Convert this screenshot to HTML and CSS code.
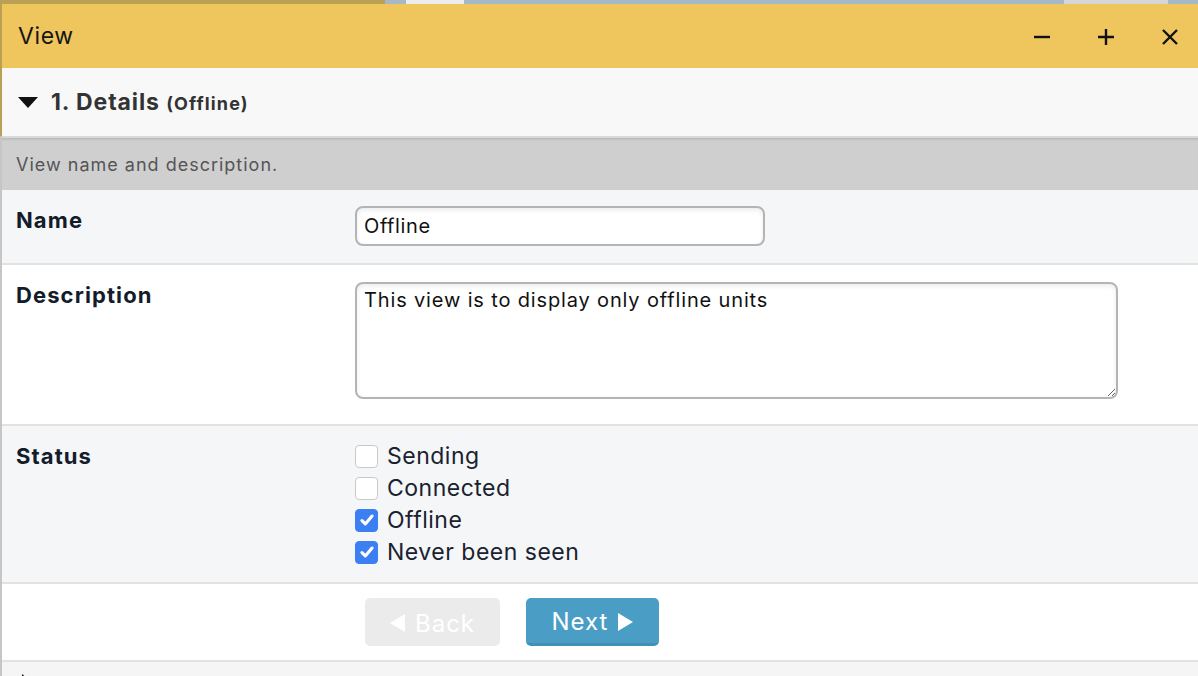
FILE: index.html
```html
<!DOCTYPE html>
<html lang="en">
<head>
    <meta charset="UTF-8">
    <title>View</title>
    <link rel="stylesheet" href="styles.css">
</head>
<body>

    <!-- strip of whatever is behind the dialog -->
    <div class="backdrop"></div>

    <div class="window">
        <!-- Title bar -->
        <div class="titlebar">
            <div class="title">View</div>
            <div class="win-icons">
                <svg class="win-icon" viewBox="0 0 20 20"><path d="M2 10H18" /></svg>
                <svg class="win-icon" viewBox="0 0 20 20"><path d="M2 10H18M10 2V18" /></svg>
                <svg class="win-icon" viewBox="0 0 20 20"><path d="M3 3L17 17M17 3L3 17" /></svg>
            </div>
        </div>

        <!-- Section 1 -->
        <div class="section-head">
            <span class="caret-down"></span>
            <span class="section-title">1. Details <small>(Offline)</small></span>
        </div>
        <div class="section-desc">View name and description.</div>

        <div class="row alt name-row">
            <div class="label">Name</div>
            <div class="field">
                <input class="text-input" type="text" value="Offline">
            </div>
        </div>

        <div class="row">
            <div class="label">Description</div>
            <div class="field desc-field">
                <textarea class="text-area">This view is to display only offline units</textarea>
            </div>
        </div>

        <div class="row alt">
            <div class="label">Status</div>
            <div class="field checks">
                <label class="check"><span class="box"></span>Sending</label>
                <label class="check"><span class="box"></span>Connected</label>
                <label class="check"><span class="box on"><svg viewBox="0 0 16 16"><path d="M3.5 8.5L6.5 11.5L12.5 4.5" /></svg></span>Offline</label>
                <label class="check"><span class="box on"><svg viewBox="0 0 16 16"><path d="M3.5 8.5L6.5 11.5L12.5 4.5" /></svg></span>Never been seen</label>
            </div>
        </div>

        <div class="row buttons">
            <button class="btn btn-back"><span class="arrow-left"></span>Back</button>
            <button class="btn btn-next">Next<span class="arrow-right"></span></button>
        </div>

        <!-- Section 2 (collapsed, cut off) -->
        <div class="section-head next-section">
            <span class="caret-right"></span>
        </div>
    </div>

</body>
</html>
```

FILE: styles.css
```css
body {
    margin: 0;
    padding: 0;
    font-family: Inter, "Noto Sans", sans-serif;
    letter-spacing: 0.045em;
    background: linear-gradient(#b9a055 0, #b9a055 136px, #c6c6c6 136px);
    height: 676px;
    overflow: hidden;
}

.backdrop {
    height: 4px;
    background: linear-gradient(90deg,
        #b9a055 0, #b9a055 385px,
        #a6b8c5 385px, #a6b8c5 406px,
        #ececec 406px, #ececec 464px,
        #a6b8c5 464px, #a6b8c5 1064px,
        #d6d6d6 1064px, #d6d6d6 1168px,
        #a6b8c5 1168px);
}

.window {
    margin-left: 2px;
    background: white;
    height: 672px;
    overflow: hidden;
}

/* Title bar */
.titlebar {
    height: 64px;
    background: #efc55d;
    display: flex;
    align-items: center;
    justify-content: space-between;
    padding: 0 18px 0 16px;
}
.title {
    font-size: 23px;
    letter-spacing: 0.6px;
    color: #151515;
}
.win-icons {
    display: flex;
    gap: 44px;
    margin-top: 2px;
}
.win-icon {
    width: 20px;
    height: 20px;
    stroke: #111;
    stroke-width: 2.4;
    fill: none;
}

/* Section header */
.section-head {
    height: 68px;
    background: #f8f8f8;
    display: flex;
    align-items: center;
    padding-left: 16px;
    border-bottom: 2px solid #d9d9d9;
}
.caret-down {
    width: 0;
    height: 0;
    border-left: 10px solid transparent;
    border-right: 10px solid transparent;
    border-top: 11px solid #111;
    margin-right: 13px;
}
.section-title {
    font-size: 23px;
    letter-spacing: 0.9px;
    font-weight: bold;
    color: #333;
}
.section-title small {
    font-size: 18px;
    letter-spacing: 1.1px;
}
.section-desc {
    height: 52px;
    background: #cfcfcf;
    color: #555;
    font-size: 18px;
    letter-spacing: 1px;
    display: flex;
    align-items: center;
    padding-left: 14px;
    box-shadow: inset 0 3px 3px -2px rgba(0,0,0,0.15);
}

/* Form rows */
.row {
    display: grid;
    grid-template-columns: 353px 1fr;
    border-bottom: 2px solid #e2e2e2;
    background: white;
}
.row.alt {
    background: #f5f6f8;
}
.label {
    padding: 17px 14px 18px;
    font-size: 22px;
    letter-spacing: 1.1px;
    font-weight: bold;
    color: #131c2b;
}
.field {
    padding: 17px 0;
}
.name-row .field {
    padding: 16px 0 17px;
}
.desc-field {
    padding: 17px 0 25px;
}
.text-input {
    width: 410px;
    height: 40px;
    box-sizing: border-box;
    border: 2px solid #b4b4b4;
    border-radius: 8px;
    padding: 0 7px;
    font-family: Inter, sans-serif;
    font-size: 20px;
    letter-spacing: 0.6px;
    color: #111;
    background: white;
    box-shadow: inset 0 2px 5px rgba(0,0,0,0.08);
    outline: none;
}
.text-area {
    display: block;
    width: 763px;
    height: 117px;
    box-sizing: border-box;
    border: 2px solid #b4b4b4;
    border-radius: 8px;
    padding: 4px 7px;
    font-family: Inter, sans-serif;
    font-size: 20px;
    letter-spacing: 0.85px;
    color: #111;
    background: white;
    box-shadow: inset 0 2px 5px rgba(0,0,0,0.08);
    outline: none;
    resize: both;
}

/* Checkboxes */
.checks {
    padding: 14px 0 14px;
}
.check {
    display: flex;
    align-items: center;
    height: 32px;
    font-size: 23px;
    letter-spacing: 0.5px;
    color: #1a2230;
}
.box {
    width: 21px;
    height: 21px;
    border: 1px solid #c9c9c9;
    border-radius: 4px;
    background: white;
    margin-right: 9px;
    display: flex;
    align-items: center;
    justify-content: center;
}
.box.on {
    background: #3b7ff2;
    border-color: #3b7ff2;
}
.box svg {
    width: 18px;
    height: 18px;
    stroke: white;
    stroke-width: 2.8;
    fill: none;
    stroke-linecap: round;
    stroke-linejoin: round;
}

/* Buttons */
.row.buttons {
    display: flex;
    gap: 26px;
    padding: 14px 0 14px 363px;
    height: 48px;
}
.btn {
    height: 48px;
    border: none;
    border-radius: 5px;
    padding-top: 3px;
    font-family: Inter, sans-serif;
    font-size: 24px;
    letter-spacing: 1px;
    color: white;
    display: flex;
    align-items: center;
    justify-content: center;
    gap: 10px;
}
.btn-back {
    width: 135px;
    background: #ebebeb;
}
.btn-next {
    width: 133px;
    background: #4a9ec6;
    border-bottom: 3px solid #4190b5;
}
.arrow-left {
    width: 0;
    height: 0;
    border-top: 9px solid transparent;
    border-bottom: 9px solid transparent;
    border-right: 15px solid white;
}
.arrow-right {
    width: 0;
    height: 0;
    border-top: 9px solid transparent;
    border-bottom: 9px solid transparent;
    border-left: 15px solid white;
}

/* next section, mostly off screen */
.next-section {
    background: #f5f5f5;
    align-items: flex-start;
    padding-top: 12px;
    padding-left: 20px;
    border-bottom: none;
}
.caret-right {
    width: 0;
    height: 0;
    border-top: 9px solid transparent;
    border-bottom: 9px solid transparent;
    border-left: 10px solid #111;
}
```
